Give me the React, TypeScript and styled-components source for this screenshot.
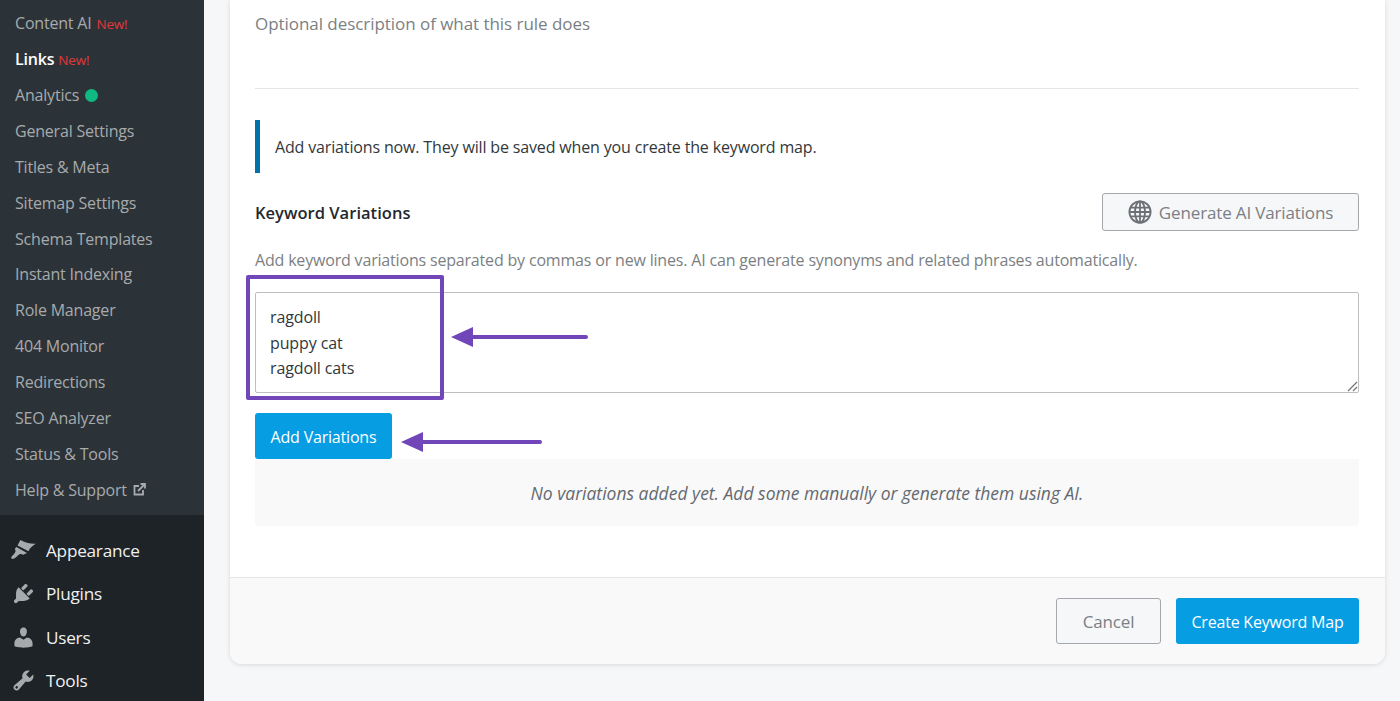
import React from "react";
import styled, { createGlobalStyle } from "styled-components";

const GlobalStyle = createGlobalStyle`
  html, body {
    margin: 0;
    padding: 0;
    height: 701px;
    overflow: hidden;
    background: #f6f7f9;
    font-family: "Open Sans", "Noto Sans", sans-serif;
  }
  * { box-sizing: border-box; }
`;

const Page = styled.div`
  display: flex;
  width: 1400px;
  height: 701px;
  overflow: hidden;
`;

const Sidebar = styled.nav`
  width: 204px;
  flex: none;
  display: flex;
  flex-direction: column;
  background: #1d2327;
`;

const SubMenu = styled.div`
  height: 515px;
  flex: none;
  padding-top: 5.3px;
  background: #2c3338;
`;

const SubItem = styled.div<{ $current?: boolean }>`
  height: 35.9px;
  padding-left: 15px;
  display: flex;
  align-items: center;
  gap: ${(props) => (props.$current ? 4 : 5)}px;
  font-size: 16px;
  letter-spacing: -0.2px;
  color: ${(props) => (props.$current ? "#ffffff" : "#a7aaad")};
  font-weight: ${(props) => (props.$current ? 600 : 400)};
`;

const NewTag = styled.span`
  color: #e0383c;
  font-size: 13.5px;
  font-weight: 400;
  position: relative;
  top: 1px;
`;

const Dot = styled.span`
  width: 13px;
  height: 13px;
  border-radius: 50%;
  background: #10b981;
  margin-left: 1px;
`;

const MainMenu = styled.div`
  padding-top: 13.6px;
`;

const MainItem = styled.div`
  height: 43.5px;
  flex: none;
  padding-left: 11px;
  display: flex;
  align-items: center;
  gap: 10px;
  font-size: 17.2px;
  letter-spacing: -0.25px;
  color: #f0f0f1;
`;

const MenuIcon = styled.svg`
  width: 25px;
  height: 25px;
  flex: none;
  fill: #a7aaad;
`;

const LinkIcon = styled.svg`
  width: 13px;
  height: 13px;
  fill: none;
  stroke: #a7aaad;
  stroke-width: 1.8;
  margin-left: 1px;
`;

const Content = styled.main`
  flex: 1;
  padding: 0 15px 0 26px;
`;

const Card = styled.section`
  height: 664px;
  background: #ffffff;
  border-radius: 0 0 12px 12px;
  box-shadow: 0 1px 5px rgba(0, 0, 0, 0.12);
  display: flex;
  flex-direction: column;
`;

const Body = styled.div`
  flex: 1;
  padding: 12px 26px 0 25px;
`;

const Description = styled.p`
  margin: 0;
  height: 77px;
  border-bottom: 1px solid #e5e5e5;
  font-size: 17px;
  line-height: 24px;
  letter-spacing: -0.05px;
  color: #7b7f84;
`;

const Notice = styled.div`
  margin-top: 31px;
  height: 53px;
  border-left: 5px solid #0073aa;
  padding-left: 15px;
  display: flex;
  align-items: center;
  font-size: 16px;
  letter-spacing: -0.15px;
  color: #32373c;
`;

const VariationsHeader = styled.div`
  margin-top: 20px;
  height: 38px;
  display: flex;
  align-items: center;
  justify-content: space-between;
`;

const Heading = styled.h3`
  margin: 0;
  font-size: 16.5px;
  font-weight: 600;
  letter-spacing: 0.03px;
  color: #23282d;
`;

const GenerateButton = styled.button`
  width: 257px;
  height: 38px;
  display: flex;
  align-items: center;
  justify-content: center;
  gap: 7px;
  border: 1px solid #a4a7ab;
  border-radius: 3px;
  background: #f6f7f9;
  color: #7b7f84;
  font: inherit;
  font-size: 17px;
  letter-spacing: -0.15px;
`;

const Hint = styled.p`
  margin: 17px 0 0;
  height: 24px;
  font-size: 16px;
  line-height: 24px;
  letter-spacing: -0.18px;
  color: #7b7f84;
`;

const FieldWrap = styled.div`
  position: relative;
  margin-top: 20px;
`;

const KeywordField = styled.div`
  position: relative;
  height: 101px;
  padding: 12px 14px;
  border: 1px solid #bcbfc2;
  border-radius: 2px;
  font-size: 16px;
  line-height: 25.5px;
  letter-spacing: -0.12px;
  color: #32373c;
  white-space: pre-line;
  background: #fff;
`;

const Grip = styled.svg`
  position: absolute;
  right: 0;
  bottom: 0;
  width: 11px;
  height: 11px;
  stroke: #777;
  stroke-width: 1.3;
  fill: none;
`;

const Highlight = styled.div`
  position: absolute;
  left: -9px;
  top: -17px;
  width: 198px;
  height: 125px;
  border: 4px solid #7046b8;
  border-radius: 2px;
`;

const Arrow = styled.svg`
  position: absolute;
  fill: #7046b8;
`;

const TopArrow = styled(Arrow)`
  left: 196px;
  top: 34px;
  width: 137px;
  height: 22px;
`;

const BottomArrow = styled(Arrow)`
  left: 146px;
  top: 139px;
  width: 141px;
  height: 22px;
`;

const PrimaryButton = styled.button<{ $width: number }>`
  display: block;
  width: ${(props) => props.$width}px;
  height: 46px;
  border: none;
  border-radius: 3px;
  background: #069de3;
  color: #ffffff;
  font: inherit;
  font-size: 16px;
  letter-spacing: -0.2px;
  padding: 2px 0 0;
`;

const AddButtonRow = styled.div`
  margin-top: 20px;
`;

const EmptyState = styled.div`
  height: 67px;
  display: flex;
  align-items: center;
  justify-content: center;
  border-radius: 0 0 4px 4px;
  background: #f9f9f9;
  font-size: 17.5px;
  font-style: italic;
  color: #646970;
`;

const Footer = styled.footer`
  height: 87px;
  flex: none;
  padding: 20px 26px 0 0;
  display: flex;
  justify-content: flex-end;
  gap: 15px;
  border-top: 1px solid #e5e5e5;
  border-radius: 0 0 12px 12px;
  background: #f9f9f9;
`;

const CancelButton = styled.button`
  width: 105px;
  height: 46px;
  border: 1px solid #a4a7ab;
  border-radius: 3px;
  background: #f6f7f9;
  color: #7b7f84;
  font: inherit;
  font-size: 17px;
  letter-spacing: -0.15px;
`;

const subItems = [
  "General Settings",
  "Titles & Meta",
  "Sitemap Settings",
  "Schema Templates",
  "Instant Indexing",
  "Role Manager",
  "404 Monitor",
  "Redirections",
  "SEO Analyzer",
  "Status & Tools",
];

const mainItems = [
  {
    label: "Appearance",
    path: "M7.5 1.5C11 3.5 15 4.8 19.8 4.6 16.8 6.3 15 8.3 14 10.5L5.2 6zM4.3 7.2L12.8 12 9.8 13.4C8.4 13 7.6 12.6 6.5 13.2 4.8 14.5 3.5 16.5 1.5 16.8.3 17-.1 15.8.4 14.9 1.3 13.4 3.3 12.2 3.6 10.7 3.7 9.6 3 9 3.2 8.3z",
  },
  {
    label: "Plugins",
    path: "M13.11 4.36L9.87 7.6 8 5.73l3.24-3.24c.35-.34 1.05-.2 1.56.32.52.51.66 1.21.31 1.55zm-8 1.77l.91-1.12 9.01 9.01-1.19.84c-.71.71-2.63 1.16-3.82 1.16H6.14L4.9 17.26c-.59.59-1.54.59-2.12 0-.59-.58-.59-1.53 0-2.12l1.24-1.24v-3.88c0-1.13.4-3.19 1.09-3.89zm7.26 3.97l3.24-3.24c.34-.35 1.04-.21 1.55.31.52.51.66 1.21.31 1.55l-3.24 3.25z",
  },
  {
    label: "Users",
    path: "M10 9.25c-2.27 0-2.73-3.44-2.73-3.44C7 4.02 7.82 2 9.97 2c2.16 0 2.98 2.02 2.71 3.81 0 0-.41 3.44-2.68 3.44zm0 2.57L12.72 10c2.39 0 4.52 2.33 4.52 4.53v2.49s-3.65 1.13-7.24 1.13c-3.65 0-7.24-1.13-7.24-1.13v-2.49c0-2.25 1.94-4.48 4.47-4.48z",
  },
  {
    label: "Tools",
    path: "M16.68 9.77c-1.34 1.34-3.3 1.67-4.95.99l-5.41 6.52c-.99.99-2.59.99-3.58 0s-.99-2.59 0-3.57l6.52-5.42c-.68-1.65-.35-3.61.99-4.95 1.28-1.28 3.12-1.62 4.72-1.06l-2.89 2.89 2.82 2.82 2.86-2.87c.53 1.58.18 3.39-1.08 4.65zM3.81 16.21c.4.39 1.04.39 1.43 0 .4-.4.4-1.04 0-1.43-.39-.4-1.03-.4-1.43 0-.39.39-.39 1.03 0 1.43z",
  },
];

function GlobeIcon() {
  return (
    <svg width="24" height="24" viewBox="0 0 24 24" fill="none" stroke="#6d7176" strokeWidth="1.8">
      <circle cx="12" cy="12" r="10.6" />
      <ellipse cx="12" cy="12" rx="5" ry="10.6" />
      <path d="M12 1.4v21.2M2.6 7.6h18.8M1.4 12h21.2M2.6 16.4h18.8" />
    </svg>
  );
}

function App() {
  return (
    <Page>
      <GlobalStyle />
      <Sidebar>
        <SubMenu>
          <SubItem>
            Content AI <NewTag>New!</NewTag>
          </SubItem>
          <SubItem $current>
            Links <NewTag>New!</NewTag>
          </SubItem>
          <SubItem>
            Analytics <Dot />
          </SubItem>
          {subItems.map((item) => (
            <SubItem key={item}>{item}</SubItem>
          ))}
          <SubItem>
            Help & Support
            <LinkIcon viewBox="0 0 13 13">
              <path d="M6 3H1.5v8.5H10V7" />
              <path d="M5 8l6.5-6.5M7.5 1h4.5v4.5" />
            </LinkIcon>
          </SubItem>
        </SubMenu>
        <MainMenu>
          {mainItems.map((item) => (
            <MainItem key={item.label}>
              <MenuIcon viewBox="0 0 20 20">
                <path d={item.path} />
              </MenuIcon>
              {item.label}
            </MainItem>
          ))}
        </MainMenu>
      </Sidebar>
      <Content>
        <Card>
          <Body>
            <Description>Optional description of what this rule does</Description>
            <Notice>Add variations now. They will be saved when you create the keyword map.</Notice>
            <VariationsHeader>
              <Heading>Keyword Variations</Heading>
              <GenerateButton>
                <GlobeIcon />
                Generate AI Variations
              </GenerateButton>
            </VariationsHeader>
            <Hint>
              Add keyword variations separated by commas or new lines. AI can generate synonyms and
              related phrases automatically.
            </Hint>
            <FieldWrap>
              <KeywordField>
                {"ragdoll\npuppy cat\nragdoll cats"}
                <Grip viewBox="0 0 11 11">
                  <path d="M1 10L10 1M6 10L10 6" />
                </Grip>
              </KeywordField>
              <Highlight />
              <TopArrow viewBox="0 0 137 22">
                <path d="M0 11L22 1v8h113a2 2 0 0 1 0 4H22v8z" />
              </TopArrow>
              <BottomArrow viewBox="0 0 141 22">
                <path d="M0 11L22 1v8h117a2 2 0 0 1 0 4H22v8z" />
              </BottomArrow>
              <AddButtonRow>
                <PrimaryButton $width={137}>Add Variations</PrimaryButton>
              </AddButtonRow>
            </FieldWrap>
            <EmptyState>No variations added yet. Add some manually or generate them using AI.</EmptyState>
          </Body>
          <Footer>
            <CancelButton>Cancel</CancelButton>
            <PrimaryButton $width={183}>Create Keyword Map</PrimaryButton>
          </Footer>
        </Card>
      </Content>
    </Page>
  );
}

export default App;
